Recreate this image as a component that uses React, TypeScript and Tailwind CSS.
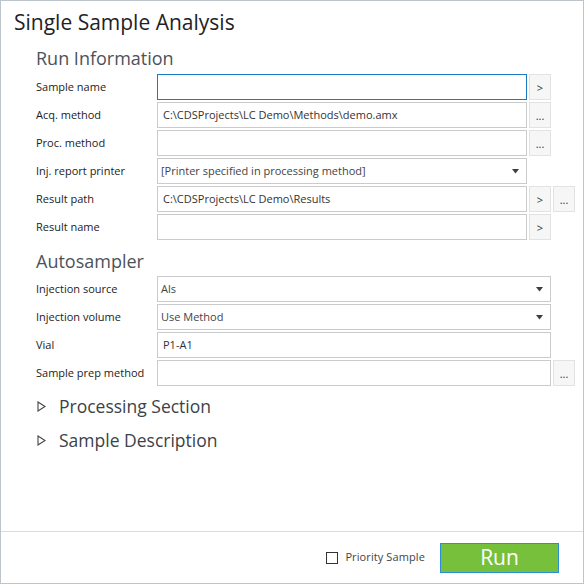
import { ReactNode } from "react"

const font = { fontFamily: '"Open Sans", "Noto Sans", sans-serif' }

function SmallButton({ children }: { children: ReactNode }) {
  return (
    <button className="w-[22px] h-[26px] shrink-0 bg-[#f6f6f6] border border-[#e2e2e2] text-[11px] text-[#333] leading-none flex items-center justify-center">
      {children}
    </button>
  )
}

function DropArrow() {
  return (
    <svg width="7" height="5" viewBox="0 0 7 5" className="shrink-0">
      <path d="M0 0 H7 L3.5 4.5 Z" fill="#3a3f44" />
    </svg>
  )
}

interface RowProps {
  label: string
  children: ReactNode
}

function Row({ label, children }: RowProps) {
  return (
    <div className="flex items-center h-[26px]">
      <div className="w-[121px] shrink-0 text-[11px] text-[#1c1c1c]">{label}</div>
      {children}
    </div>
  )
}

function TextBox({ value = "", width, focused = false }: { value?: string; width: string; focused?: boolean }) {
  return (
    <div
      className={
        (focused ? "border-[#1a7bc4] " : "border-[#c9cbcc] ") +
        width +
        " h-[26px] shrink-0 border bg-white px-[5px] flex items-center text-[11px] text-[#333] whitespace-nowrap overflow-hidden"
      }
    >
      {value}
    </div>
  )
}

function SelectBox({ value, width }: { value: string; width: string }) {
  return (
    <div
      className={
        width +
        " h-[26px] shrink-0 border border-[#c9cbcc] bg-white pl-[3px] pr-[7px] flex items-center justify-between text-[11px] text-[#444] whitespace-nowrap"
      }
    >
      <span>{value}</span>
      <DropArrow />
    </div>
  )
}

function Expander({ title }: { title: string }) {
  return (
    <div className="flex items-center h-[34px] pl-[36px]">
      <svg width="9" height="11" viewBox="0 0 9 11" className="mr-[13px]">
        <path d="M1 1 L8 5.5 L1 10 Z" fill="none" stroke="#444" strokeWidth="1.1" />
      </svg>
      <span className="text-[17.5px] text-[#3c4248]">{title}</span>
    </div>
  )
}

export default function App() {
  return (
    <div style={font} className="w-[585px] h-[585px] bg-white">
      <div className="w-[584px] h-[584px] border border-[#bcc5cc] flex flex-col">
        <div className="flex-1">
          <h1 className="pl-[13px] pt-[7px] text-[21px] text-[#1e2226] leading-[28px]">Single Sample Analysis</h1>

          <h2 className="pl-[35px] mt-[10px] text-[18px] text-[#4b535a] leading-[24px]">Run Information</h2>
          <div className="pl-[35px] mt-[4px] flex flex-col gap-[2px]">
            <Row label="Sample name">
              <TextBox width="w-[370px]" focused />
              <div className="ml-[2px]"><SmallButton>&gt;</SmallButton></div>
            </Row>
            <Row label="Acq. method">
              <TextBox width="w-[370px]" value="C:\CDSProjects\LC Demo\Methods\demo.amx" />
              <div className="ml-[2px]"><SmallButton>...</SmallButton></div>
            </Row>
            <Row label="Proc. method">
              <TextBox width="w-[370px]" />
              <div className="ml-[2px]"><SmallButton>...</SmallButton></div>
            </Row>
            <Row label="Inj. report printer">
              <SelectBox width="w-[370px]" value="[Printer specified in processing method]" />
            </Row>
            <Row label="Result path">
              <TextBox width="w-[370px]" value="C:\CDSProjects\LC Demo\Results" />
              <div className="ml-[2px] flex gap-[2px]">
                <SmallButton>&gt;</SmallButton>
                <SmallButton>...</SmallButton>
              </div>
            </Row>
            <Row label="Result name">
              <TextBox width="w-[370px]" />
              <div className="ml-[2px]"><SmallButton>&gt;</SmallButton></div>
            </Row>
          </div>

          <h2 className="pl-[35px] mt-[9px] text-[18px] text-[#4b535a] leading-[24px]">Autosampler</h2>
          <div className="pl-[35px] mt-[3px] flex flex-col gap-[2px]">
            <Row label="Injection source">
              <SelectBox width="w-[394px]" value="Als" />
            </Row>
            <Row label="Injection volume">
              <SelectBox width="w-[394px]" value="Use Method" />
            </Row>
            <Row label="Vial">
              <TextBox width="w-[394px]" value="P1-A1" />
            </Row>
            <Row label="Sample prep method">
              <TextBox width="w-[394px]" />
              <div className="ml-[2px]"><SmallButton>...</SmallButton></div>
            </Row>
          </div>

          <div className="mt-[3px]">
            <Expander title="Processing Section" />
            <Expander title="Sample Description" />
          </div>
        </div>

        <div className="h-[52px] border-t border-[#dcdcdc] flex items-center justify-end pr-[24px]">
          <label className="flex items-center gap-[7px] mr-[15px]">
            <span className="w-[12px] h-[12px] border border-[#333] bg-white" />
            <span className="text-[11px] text-[#444] tracking-[0.1px]">Priority Sample</span>
          </label>
          <button className="w-[119px] h-[30px] bg-[#77c03b] border border-[#2b8fd6] text-white text-[21px] leading-none">
            Run
          </button>
        </div>
      </div>
    </div>
  )
}
